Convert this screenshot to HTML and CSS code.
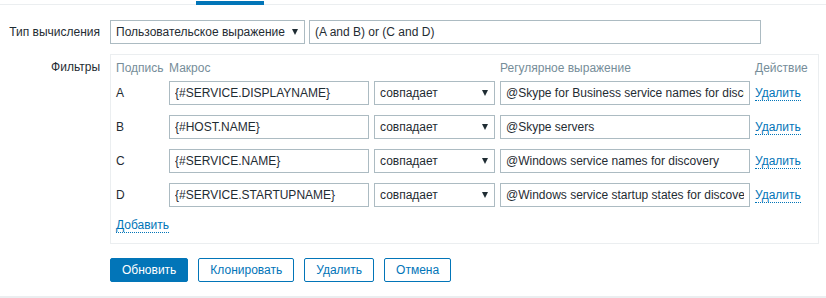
FILE: index.html
```html
<!DOCTYPE html>
<html lang="ru">
<head>
  <meta charset="UTF-8" />
  <title>Фильтры</title>
  <link rel="stylesheet" href="styles.css">
</head>
<body>
<div class="tabs">
  <span class="tab-active"></span>
</div>
<div class="form">
  <div class="form-row">
    <label class="form-label">Тип вычисления</label>
    <div class="form-field">
      <div class="select select-type">Пользовательское выражение<span class="arrow"></span></div>
      <input class="input formula" type="text" value="(A and B) or (C and D)">
    </div>
  </div>
  <div class="form-row">
    <label class="form-label label-top">Фильтры</label>
    <div class="form-field">
      <div class="filters">
        <table>
          <tr>
            <th class="col-label">Подпись</th>
            <th>Макрос</th>
            <th></th>
            <th>Регулярное выражение</th>
            <th>Действие</th>
          </tr>
          <tr>
            <td>A</td>
            <td><input class="input macro" type="text" value="{#SERVICE.DISPLAYNAME}"></td>
            <td><div class="select op">совпадает<span class="arrow"></span></div></td>
            <td><input class="input regex" type="text" value="@Skype for Business service names for discovery"></td>
            <td><a class="link" href="#">Удалить</a></td>
          </tr>
          <tr>
            <td>B</td>
            <td><input class="input macro" type="text" value="{#HOST.NAME}"></td>
            <td><div class="select op">совпадает<span class="arrow"></span></div></td>
            <td><input class="input regex" type="text" value="@Skype servers"></td>
            <td><a class="link" href="#">Удалить</a></td>
          </tr>
          <tr>
            <td>C</td>
            <td><input class="input macro" type="text" value="{#SERVICE.NAME}"></td>
            <td><div class="select op">совпадает<span class="arrow"></span></div></td>
            <td><input class="input regex" type="text" value="@Windows service names for discovery"></td>
            <td><a class="link" href="#">Удалить</a></td>
          </tr>
          <tr>
            <td>D</td>
            <td><input class="input macro" type="text" value="{#SERVICE.STARTUPNAME}"></td>
            <td><div class="select op">совпадает<span class="arrow"></span></div></td>
            <td><input class="input regex" type="text" value="@Windows service startup states for discovery"></td>
            <td><a class="link" href="#">Удалить</a></td>
          </tr>
          <tr>
            <td colspan="5"><a class="link" href="#">Добавить</a></td>
          </tr>
        </table>
      </div>
    </div>
  </div>
  <div class="actions">
    <button class="btn btn-primary">Обновить</button>
    <button class="btn">Клонировать</button>
    <button class="btn">Удалить</button>
    <button class="btn">Отмена</button>
  </div>
</div>
<div class="footer-line"></div>
</body>
</html>
```

FILE: styles.css
```css
body {
  margin: 0;
  background: #fff;
  font-family: "Liberation Sans", Arial, sans-serif;
  font-size: 12px;
  color: #1f2c33;
}
.tabs {
  height: 4px;
  border-bottom: 1px solid #ebeef0;
  position: relative;
}
.tab-active {
  position: absolute;
  left: 196px;
  top: 1px;
  width: 68px;
  height: 4px;
  background: #0275b8;
}
.form {
  padding-top: 15px;
}
.form-row {
  display: flex;
  margin-bottom: 10px;
}
.form-label {
  width: 100px;
  padding-right: 10px;
  text-align: right;
  line-height: 24px;
  flex-shrink: 0;
}
.label-top {
  line-height: 16px;
  padding-top: 5px;
}
.form-field {
  display: flex;
  gap: 4px;
}
.input {
  box-sizing: border-box;
  height: 24px;
  border: 1px solid #acbbc2;
  padding: 0 5px;
  font-family: inherit;
  font-size: 12px;
  color: #1f2c33;
  background: #fff;
  margin: 0;
  outline: none;
}
.select {
  box-sizing: border-box;
  height: 24px;
  border: 1px solid #acbbc2;
  padding: 0 6px 0 5px;
  line-height: 22px;
  display: flex;
  justify-content: space-between;
  align-items: center;
  background: #fff;
}
.arrow {
  width: 0;
  height: 0;
  border-top: 6px solid #1f2c33;
  border-left: 3.5px solid transparent;
  border-right: 3.5px solid transparent;
}
.select-type {
  width: 195px;
}
.formula {
  width: 452px;
}
.filters {
  border: 1px solid #ebeef0;
  padding: 5px;
}
table {
  border-collapse: collapse;
}
th {
  font-weight: normal;
  text-align: left;
  color: #768d99;
  padding: 0 5px 0 0;
  line-height: 16px;
  height: 16px;
}
th.col-label {
  width: 48px;
}
td {
  padding: 5px 5px 5px 0;
  line-height: 16px;
  vertical-align: middle;
}
.macro {
  width: 200px;
}
.op {
  width: 121px;
}
.regex {
  width: 250px;
}
.link {
  color: #0275b8;
  text-decoration: none;
  border-bottom: 1px dotted #0275b8;
}
.actions {
  display: flex;
  gap: 10px;
  padding-left: 110px;
  margin-top: 14px;
}
.btn {
  height: 24px;
  padding: 0 11px;
  border: 1px solid #0275b8;
  border-radius: 2px;
  background: #fff;
  color: #0275b8;
  font-family: inherit;
  font-size: 12px;
}
.btn-primary {
  background: #0275b8;
  color: #fff;
}
.footer-line {
  margin-top: 14px;
  height: 2px;
  background: #ebeef0;
}
```
